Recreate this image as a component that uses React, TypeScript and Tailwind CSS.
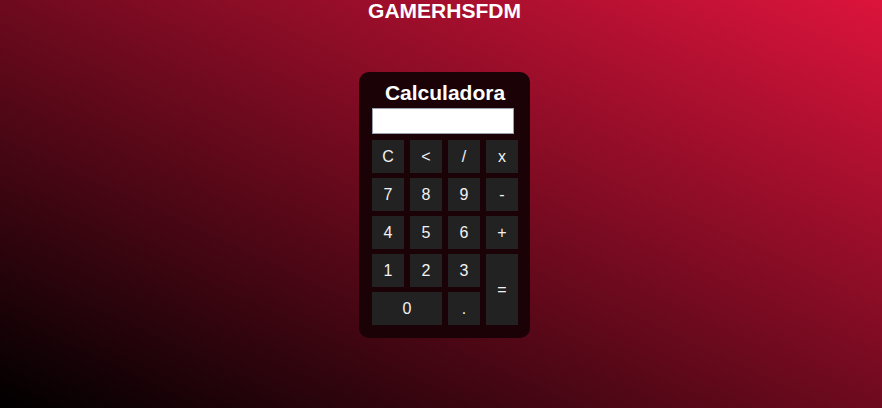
import React, { useState } from "react";

// --- Teclas da calculadora ---
const keys: { label: string; span?: string }[] = [
  { label: "C" },
  { label: "<" },
  { label: "/" },
  { label: "x" },
  { label: "7" },
  { label: "8" },
  { label: "9" },
  { label: "-" },
  { label: "4" },
  { label: "5" },
  { label: "6" },
  { label: "+" },
  { label: "1" },
  { label: "2" },
  { label: "3" },
  { label: "=", span: "row-span-2" },
  { label: "0", span: "col-span-2" },
  { label: "." },
];

const App: React.FC = () => {
  const [display, setDisplay] = useState("");

  const handleKey = (k: string) => {
    if (k === "C") return setDisplay("");
    if (k === "<") return setDisplay((d) => d.slice(0, -1));
    if (k === "=") {
      try {
        // eslint-disable-next-line no-new-func
        const r = Function(`return (${display.replace(/x/g, "*")})`)();
        setDisplay(String(r));
      } catch {
        setDisplay("Erro");
      }
      return;
    }
    setDisplay((d) => d + k);
  };

  return (
    <div className="min-h-screen bg-[linear-gradient(to_top_right,#000000,#dc143c)] font-['Liberation_Sans',Arial,sans-serif] flex flex-col items-center pl-[7px]">
      <h1 className="text-white text-[21px] font-bold leading-6 mt-[-1px]">GAMERHSFDM</h1>

      <div className="mt-[49px] w-[171px] bg-[#1a0207] rounded-[10px] pt-[9px] pl-[13px] pr-[12px] pb-[13px]">
        <h2 className="text-white text-[21px] font-bold leading-6 text-center">
          Calculadora
        </h2>
        <input
          className="mt-[3px] block w-[142px] h-[26px] bg-white border border-gray-400 text-black px-1 outline-none"
          value={display}
          readOnly
        />
        <div className="mt-[6px] grid grid-cols-[repeat(4,32px)] grid-rows-[repeat(5,33px)] gap-x-[6px] gap-y-[5px]">
          {keys.map((k) => (
            <button
              key={k.label}
              className={`bg-[#222222] text-[#f2f2f2] text-base flex items-center justify-center ${k.span ?? ""}`}
              onClick={() => handleKey(k.label)}
            >
              {k.label}
            </button>
          ))}
        </div>
      </div>
    </div>
  );
};

export default App;
